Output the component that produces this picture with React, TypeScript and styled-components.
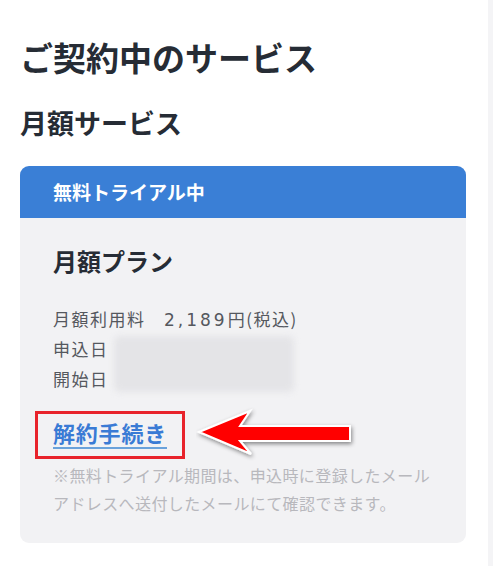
import React from 'react';
import styled, {createGlobalStyle} from 'styled-components';

const GlobalStyle = createGlobalStyle`
  html, body {
    margin: 0;
    padding: 0;
    background: #ffffff;
  }
  body {
    font-family: "Noto Sans CJK JP", "Noto Sans", sans-serif;
  }
`;

const App = () => {
    return <Root>
        <GlobalStyle/>
        <Main>
            <PageTitle>ご契約中のサービス</PageTitle>
            <SectionTitle>月額サービス</SectionTitle>

            <Card>
                <CardHeader>無料トライアル中</CardHeader>
                <CardBody>
                    <PlanName>月額プラン</PlanName>

                    <InfoGrid>
                        <InfoFull>月額利用料　<Price>2,189</Price>円(税込)</InfoFull>
                        <InfoLabel>申込日</InfoLabel>
                        <Masked/>
                        <InfoLabel>開始日</InfoLabel>
                    </InfoGrid>

                    <ActionRow>
                        <Highlight>
                            <CancelLink href="#">解約手続き</CancelLink>
                        </Highlight>
                        <Arrow width="164" height="56" viewBox="0 0 164 56">
                            <defs>
                                <filter id="arrowShadow" x="-10%" y="-20%" width="130%" height="150%">
                                    <feDropShadow dx="1" dy="2" stdDeviation="2" floodColor="#000" floodOpacity="0.45"/>
                                </filter>
                            </defs>
                            <path
                                d="M3 25 L54 4 L44 19 L154 19 L154 34 L44 34 L55 47 Z"
                                fill="#ff0000"
                                stroke="#ffffff"
                                strokeWidth="2"
                                strokeLinejoin="miter"
                                filter="url(#arrowShadow)"
                            />
                        </Arrow>
                    </ActionRow>

                    <Note>
                        ※無料トライアル期間は、申込時に登録したメール<br/>
                        アドレスへ送付したメールにて確認できます。
                    </Note>
                </CardBody>
            </Card>
        </Main>
        <Gutter/>
    </Root>;
};

export default App;



const Root = styled.div`
  display: flex;
  min-height: 566px;
`;

const Main = styled.main`
  width: 488px;
  box-sizing: border-box;
  padding: 35px 22px 20px 20px;
  color: #262c35;
`;

const Gutter = styled.div`
  flex: 1;
  background: #f4f4f6;
`;

const PageTitle = styled.h1`
  margin: 0;
  font-size: 33px;
  line-height: 44px;
  font-weight: 700;
`;

const SectionTitle = styled.h2`
  margin: 26px 0 0;
  font-size: 27px;
  line-height: 36px;
  font-weight: 700;
`;

const Card = styled.section`
  margin-top: 25px;
  border-radius: 9px;
  overflow: hidden;
  background: #f2f2f4;
`;

const CardHeader = styled.div`
  height: 52px;
  line-height: 52px;
  padding-left: 33px;
  background: #3a7fd6;
  color: #ffffff;
  font-size: 19px;
  font-weight: 700;
`;

const CardBody = styled.div`
  padding: 26px 33px 26px;
`;

const PlanName = styled.div`
  font-size: 24px;
  line-height: 34px;
  font-weight: 700;
  color: #262c35;
`;

const InfoGrid = styled.div`
  margin-top: 26px;
  display: grid;
  grid-template-columns: 58px 180px;
  grid-auto-rows: 30px;
  column-gap: 3px;
  font-size: 17px;
  line-height: 30px;
  letter-spacing: 1.5px;
  color: #55585e;
`;

const InfoFull = styled.div`
  grid-column: 1 / -1;
  white-space: nowrap;
`;

const Price = styled.span`
  font-family: "DejaVu Sans", sans-serif;
  font-size: 17px;
  letter-spacing: 3px;
`;

const InfoLabel = styled.div`
  grid-column: 1;
  white-space: nowrap;
`;

const Masked = styled.div`
  grid-column: 2;
  grid-row: 2 / span 2;
  align-self: center;
  height: 56px;
  border-radius: 6px;
  background: #e4e4e7;
  filter: blur(3px);
`;

const ActionRow = styled.div`
  margin: 17px 0 0 -18px;
  display: flex;
  align-items: flex-start;
`;

const Highlight = styled.div`
  border: 3px solid #e8232b;
  padding: 4px 15px 7px;
`;

const CancelLink = styled.a`
  display: inline-block;
  font-size: 22px;
  line-height: 29px;
  font-weight: 700;
  letter-spacing: 0.8px;
  color: #3a7bd5;
  text-decoration: none;
  border-bottom: 2px solid #6aa2db;
`;

const Arrow = styled.svg`
  display: block;
  margin: -4px 0 -4px 11px;
`;

const Note = styled.p`
  margin: 2px 0 0;
  font-size: 16px;
  line-height: 28px;
  letter-spacing: 0.4px;
  color: #b8b8bd;
  white-space: nowrap;
`;
